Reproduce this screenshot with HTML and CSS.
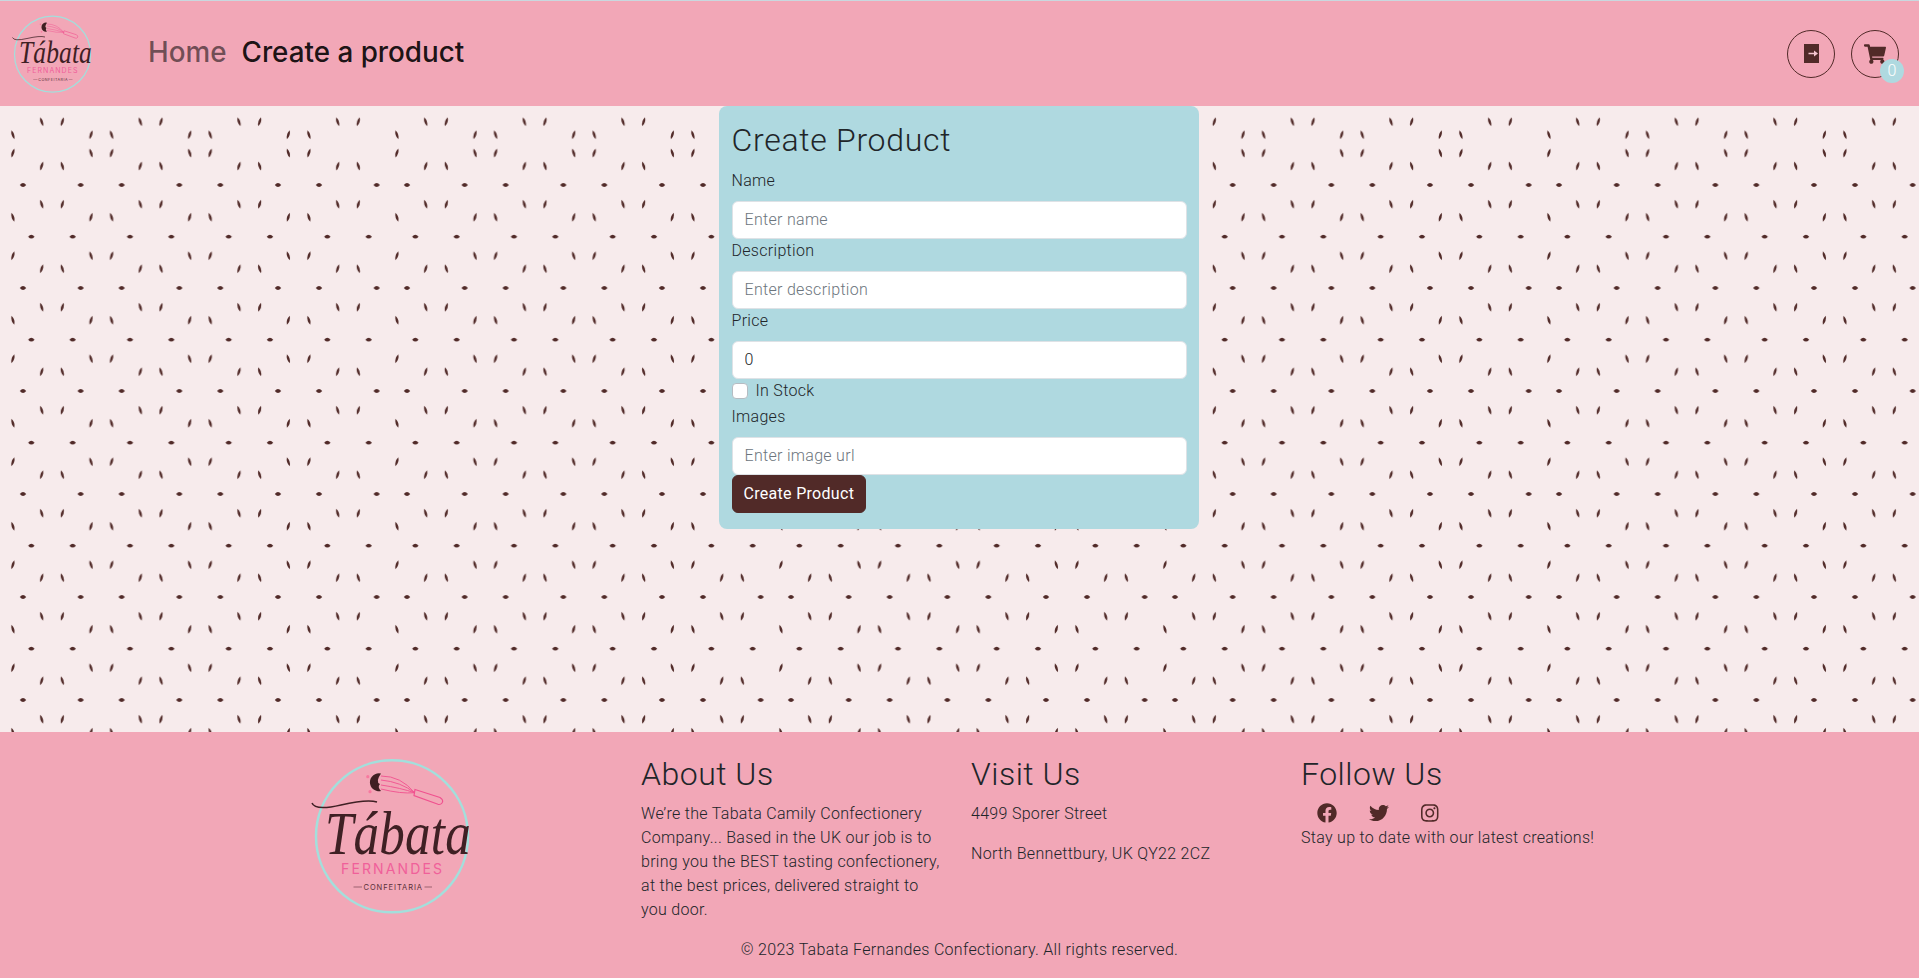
FILE: index.html
```html
<!DOCTYPE html>
<html lang="en">
<head>
<meta charset="utf-8">
<title>Tabata Fernandes Confectionary</title>
<link rel="stylesheet" href="styles.css">
</head>
<body>
<svg class="defs" width="0" height="0" aria-hidden="true">
  <symbol id="logo" viewBox="0 0 160 160">
    <circle cx="81" cy="80.3" r="76" fill="none" stroke="#a3dfdc" stroke-width="2.500"/>
    <g fill="none" stroke="#f0518f" stroke-width="0.9">
      <path d="M70 20Q90 20 103.5 36.7M70 24Q90 26 103.5 36.7M70 29Q90 32 103.5 36.7M70 33Q90 38 103.5 36.7"/>
      <path d="M104 33.5L129 41.5Q133 44 131 47Q129.500 49 127 48.300L103 39.500Z" stroke-width="1.200"/>
    </g>
    <path d="M70 17.500A9 9 0 1 0 70 35Q66 31 69 28Q64 26 70 17.500Z" fill="#3f1f22"/>
    <circle cx="56.800" cy="20.700" r="1.600" fill="#f7799f"/>
    <circle cx="59" cy="35.700" r="1.600" fill="#f7799f"/>
    <path d="M1 47Q4 55 30 49T66 46" fill="none" stroke="#3f2024" stroke-width="1.500"/>
    <text class="logo-name" x="14" y="98" textLength="146" lengthAdjust="spacingAndGlyphs">Tábata</text>
    <text class="logo-sub" x="30" y="117.500" textLength="101">FERNANDES</text>
    <path d="M42.500 131H51M113.500 131H121" stroke="#7a4552" stroke-width="0.700"/>
    <text class="logo-small" x="52.500" y="133.500" textLength="58.500">CONFEITARIA</text>
  </symbol>
</svg>

<header class="site-header">
  <a class="brand" href="#"><svg class="brand-logo"><use href="#logo"/></svg></a>
  <nav class="main-nav">
    <a class="nav-link" href="#">Home</a>
    <a class="nav-link nav-link-active" href="#">Create a product</a>
  </nav>
  <div class="actions">
    <button class="round-btn" type="button" aria-label="Log out">
      <svg class="icon-door" viewBox="0 0 15 19"><rect width="15" height="19" fill="#512a28"/><path d="M4.500 8.700H10V6.500L14 9.500L10 12.500V10.300H4.500Z" fill="#f6c6d0"/></svg>
    </button>
    <button class="round-btn" type="button" aria-label="Cart">
      <svg class="icon-cart" viewBox="0 0 576 512"><path fill="#512a28" d="M528.12 301.319l47.273-208C578.806 78.301 567.391 64 551.99 64H159.208l-9.166-44.81C147.758 8.021 137.93 0 126.529 0H24C10.745 0 0 10.745 0 24v16c0 13.255 10.745 24 24 24h69.883l70.248 343.435C147.325 417.1 136 435.222 136 456c0 30.928 25.072 56 56 56s56-25.072 56-56c0-15.674-6.447-29.835-16.824-40h209.647C430.447 426.165 424 440.326 424 456c0 30.928 25.072 56 56 56s56-25.072 56-56c0-22.172-12.888-41.332-31.579-50.405l5.517-24.276c3.413-15.018-8.002-29.319-23.403-29.319H218.117l-6.545-32h293.145c11.206 0 20.92-7.754 23.403-18.681z"/></svg>
      <span class="badge">0</span>
    </button>
  </div>
</header>

<main class="site-main">
  <form class="product-card">
    <h2 class="card-title">Create Product</h2>
    <label class="field-label" for="name">Name</label>
    <input class="field-input" id="name" type="text" placeholder="Enter name">
    <label class="field-label" for="description">Description</label>
    <input class="field-input" id="description" type="text" placeholder="Enter description">
    <label class="field-label" for="price">Price</label>
    <input class="field-input" id="price" type="number" value="0">
    <div class="check-row">
      <input class="check-box" id="stock" type="checkbox">
      <label class="check-label" for="stock">In Stock</label>
    </div>
    <label class="field-label" for="images">Images</label>
    <input class="field-input" id="images" type="text" placeholder="Enter image url">
    <button class="submit-btn" type="submit">Create Product</button>
  </form>
</main>

<footer class="site-footer">
  <div class="footer-grid">
    <div class="footer-col"><svg class="footer-logo"><use href="#logo"/></svg></div>
    <div class="footer-col">
      <h3 class="footer-title">About Us</h3>
      <p class="footer-text">We’re the Tabata Camily Confectionery Company... Based in the UK our job is to bring you the BEST tasting confectionery, at the best prices, delivered straight to you door.</p>
    </div>
    <div class="footer-col">
      <h3 class="footer-title">Visit Us</h3>
      <p class="footer-text">4499 Sporer Street</p>
      <p class="footer-text">North Bennettbury, UK QY22 2CZ</p>
    </div>
    <div class="footer-col">
      <h3 class="footer-title">Follow Us</h3>
      <div class="socials">
        <svg class="social-icon" viewBox="0 0 512 512"><path d="M504 256C504 119 393 8 256 8S8 119 8 256c0 123.78 90.69 226.38 209.25 245V327.69h-63V256h63v-54.64c0-62.15 37-96.48 93.67-96.48 27.14 0 55.52 4.84 55.52 4.84v61h-31.28c-30.8 0-40.41 19.12-40.41 38.73V256h68.78l-11 71.69h-57.78V501C413.31 482.38 504 379.78 504 256z"/></svg>
        <svg class="social-icon" viewBox="0 0 512 512"><path d="M459.37 151.716c.325 4.548.325 9.097.325 13.645 0 138.72-105.583 298.558-298.558 298.558-59.452 0-114.68-17.219-161.137-47.106 8.447.974 16.568 1.299 25.34 1.299 49.055 0 94.213-16.568 130.274-44.832-46.132-.975-84.792-31.188-98.112-72.772 6.498.974 12.995 1.624 19.818 1.624 9.421 0 18.843-1.3 27.614-3.573-48.081-9.747-84.143-51.98-84.143-102.985v-1.299c13.969 7.797 30.214 12.67 47.431 13.319-28.264-18.843-46.781-51.005-46.781-87.391 0-19.492 5.197-37.36 14.294-52.954 51.655 63.675 129.3 105.258 216.365 109.807-1.624-7.797-2.599-15.918-2.599-24.04 0-57.828 46.782-104.934 104.934-104.934 30.213 0 57.502 12.67 76.67 33.137 23.715-4.548 46.456-13.32 66.599-25.34-7.798 24.366-24.366 44.833-46.132 57.827 21.117-2.273 41.584-8.122 60.426-16.243-14.292 20.791-32.161 39.308-52.628 54.253z"/></svg>
        <svg class="social-icon social-icon-narrow" viewBox="0 0 448 512"><path d="M224.1 141c-63.6 0-114.9 51.3-114.9 114.9s51.3 114.9 114.9 114.9S339 319.5 339 255.9 287.7 141 224.1 141zm0 189.6c-41.1 0-74.7-33.5-74.7-74.7s33.5-74.7 74.7-74.7 74.7 33.5 74.7 74.7-33.6 74.7-74.7 74.7zm146.4-194.3c0 14.9-12 26.8-26.8 26.8-14.9 0-26.8-12-26.8-26.8s12-26.8 26.8-26.8 26.8 12 26.8 26.8zm76.1 27.2c-1.7-35.9-9.9-67.7-36.2-93.9-26.2-26.2-58-34.4-93.9-36.2-37-2.1-147.9-2.1-184.9 0-35.8 1.7-67.6 9.9-93.9 36.1s-34.4 58-36.2 93.9c-2.1 37-2.1 147.9 0 184.9 1.7 35.9 9.9 67.7 36.2 93.9s58 34.4 93.9 36.2c37 2.1 147.9 2.1 184.9 0 35.9-1.7 67.7-9.9 93.9-36.2 26.2-26.2 34.4-58 36.2-93.9 2.1-37 2.1-147.8 0-184.8zM398.8 388c-7.8 19.6-22.9 34.7-42.6 42.6-29.5 11.7-99.5 9-132.1 9s-102.7 2.6-132.1-9c-19.6-7.8-34.7-22.9-42.6-42.6-11.7-29.5-9-99.5-9-132.1s-2.6-102.7 9-132.1c7.8-19.6 22.9-34.7 42.6-42.6 29.5-11.7 99.5-9 132.1-9s102.7-2.6 132.1 9c19.6 7.8 34.7 22.9 42.6 42.6 11.7 29.5 9 99.5 9 132.1s2.7 102.7-9 132.1z"/></svg>
      </div>
      <p class="footer-text">Stay up to date with our latest creations!</p>
    </div>
  </div>
  <p class="copyright">© 2023 Tabata Fernandes Confectionary. All rights reserved.</p>
</footer>
</body>
</html>
```

FILE: styles.css
```css
* { box-sizing: border-box; }

html, body { height: 100%; }

body {
  margin: 0;
  min-height: 978px;
  display: flex;
  flex-direction: column;
  font-family: Roboto, "Liberation Sans", sans-serif;
  font-weight: 300;
  font-size: 16px;
  line-height: 24px;
  letter-spacing: .3px;
  color: #212529;
  background: #f7ebec;
}

.defs { position: absolute; }

/* Header */
.site-header {
  flex: none;
  height: 106px;
  display: flex;
  align-items: center;
  padding: 0 20px 0 12px;
  background: #f2a7b7;
  border-top: 1px solid #c9d8df;
}

.brand { display: block; width: 80px; height: 80px; }
.brand-logo { display: block; width: 80px; height: 80px; }

.main-nav {
  display: flex;
  gap: 15px;
  margin-left: 56px;
  margin-top: -4px;
}

.nav-link {
  font-family: Inter, "Liberation Sans", sans-serif;
  font-weight: 500;
  font-size: 27.8px;
  line-height: 40px;
  letter-spacing: 0;
  color: rgba(0, 0, 0, .55);
  text-decoration: none;
}

.nav-link-active { color: rgba(0, 0, 0, .9); }

.actions { margin-left: auto; display: flex; gap: 16px; }

.round-btn {
  position: relative;
  width: 48px;
  height: 48px;
  padding: 0;
  display: flex;
  align-items: center;
  justify-content: center;
  background: transparent;
  border: 1px solid #512a28;
  border-radius: 50%;
}

.icon-door { width: 15px; height: 19px; }
.icon-cart { width: 22px; height: 20px; }

.badge {
  position: absolute;
  right: -6px;
  bottom: -6px;
  width: 24px;
  height: 24px;
  border-radius: 50%;
  background: #afd9e0;
  color: #fff;
  font-family: Roboto, sans-serif;
  font-weight: 300;
  font-size: 16px;
  line-height: 24px;
  text-align: center;
}

/* Main */
.site-main {
  flex: 1;
  display: flex;
  justify-content: center;
  align-items: flex-start;
  background-color: #f7ebec;
  background-image: url("data:image/svg+xml,<svg xmlns='http://www.w3.org/2000/svg' xmlns:xlink='http://www.w3.org/1999/xlink' width='384' height='626'><defs><path id='b' d='M-1.4 -4.5Q2.5 -.8 1.4 4.5Q-2.5 .8 -1.4 -4.5Z'/><path id='f' d='M1.4 -4.5Q-2.5 -.8 -1.4 4.5Q2.5 .8 1.4 -4.5Z'/><path id='d' d='M-3.2 0Q0 -3.8 3.2 0Q0 3.8 -3.2 0Z'/><g id='T'><use href='%23b' x='41.67'/><use href='%23f' x='62.33'/><use href='%23b' x='12.9' y='13'/><use href='%23f' x='91' y='13'/></g><g id='B'><use href='%23f' x='12.9'/><use href='%23b' x='91'/><use href='%23f' x='41.67' y='13'/><use href='%23b' x='62.33' y='13'/></g><pattern id='p' width='98.667' height='103' x='0' y='70' patternUnits='userSpaceOnUse'><g fill='%23512a28'><use href='%23d' x='23' y='9'/><use href='%23d' x='80.67' y='9'/><use href='%23T' y='28.3'/><use href='%23d' x='31.33' y='60.7'/><use href='%23d' x='72.67' y='60.7'/><use href='%23B' y='79.7'/></g></pattern><pattern id='q' width='98.667' height='70' x='0' y='0' patternUnits='userSpaceOnUse'><g fill='%23512a28'><use href='%23T' y='15.7'/><use href='%23B' y='47'/></g></pattern></defs><rect width='384' height='70' fill='url(%23q)'/><rect y='70' width='384' height='556' fill='url(%23p)'/></svg>");
  background-repeat: repeat-x;
  background-size: 384px 626px;
}

.product-card {
  width: 480px;
  margin-right: 1px;
  padding: 15px 12.5px 16px;
  background: #afd9e0;
  border-radius: 8px;
}

.card-title {
  margin: 0 0 10px;
  font-size: 32px;
  line-height: 38.4px;
  font-weight: 300;
  letter-spacing: .7px;
}

.field-label { display: block; margin-bottom: 8px; }

.field-input {
  display: block;
  width: 100%;
  height: 38px;
  padding: 5px 12px 7px;
  font: inherit;
  letter-spacing: inherit;
  color: #212529;
  background: #fff;
  border: 1px solid #dee2e6;
  border-radius: 6px;
}

.field-input::placeholder { color: #6c757d; opacity: 1; }

.check-row {
  display: flex;
  align-items: flex-start;
  gap: 8px;
  height: 26px;
}

.check-box {
  appearance: none;
  flex: none;
  width: 16px;
  height: 16px;
  margin: 4px 0 0;
  background: #fff;
  border: 1px solid #b5bcc2;
  border-radius: 4px;
}

.submit-btn {
  display: block;
  height: 38px;
  padding: 6px 11px;
  font: inherit;
  font-weight: 400;
  letter-spacing: inherit;
  color: #fff;
  background: #512a28;
  border: 1px solid #512a28;
  border-radius: 6px;
}

/* Footer */
.site-footer {
  flex: none;
  height: 246px;
  padding-top: 23px;
  background: #f2a7b7;
}

.footer-grid {
  width: 1320px;
  margin-left: 299px;
  display: grid;
  grid-template-columns: repeat(4, 330px);
  height: 183px;
}

.footer-col { padding: 0 12px; min-width: 0; }

.footer-logo { display: block; width: 160px; height: 160px; margin-top: 1px; }

.footer-title {
  margin: 0 0 9px;
  font-size: 32px;
  line-height: 38.4px;
  font-weight: 300;
  letter-spacing: .5px;
}

.footer-text { margin: 0 0 16px; }

.socials {
  display: flex;
  align-items: center;
  gap: 32px;
  height: 24px;
  padding: 0 0 2px 16px;
}

.social-icon { width: 20px; height: 20px; fill: #512a28; }
.social-icon-narrow { width: 17.5px; }

.copyright { margin: 0; text-align: center; }

/* Logo text */
.logo-name {
  font-family: "Liberation Serif", serif;
  font-style: italic;
  font-size: 62px;
  fill: #3f2024;
}

.logo-sub {
  font-family: Inter, sans-serif;
  font-weight: 400;
  font-size: 14px;
  letter-spacing: 0;
  fill: #f0609a;
}

.logo-small {
  font-family: Inter, sans-serif;
  font-weight: 400;
  font-size: 7.5px;
  letter-spacing: 0;
  fill: #5a3038;
}
```
